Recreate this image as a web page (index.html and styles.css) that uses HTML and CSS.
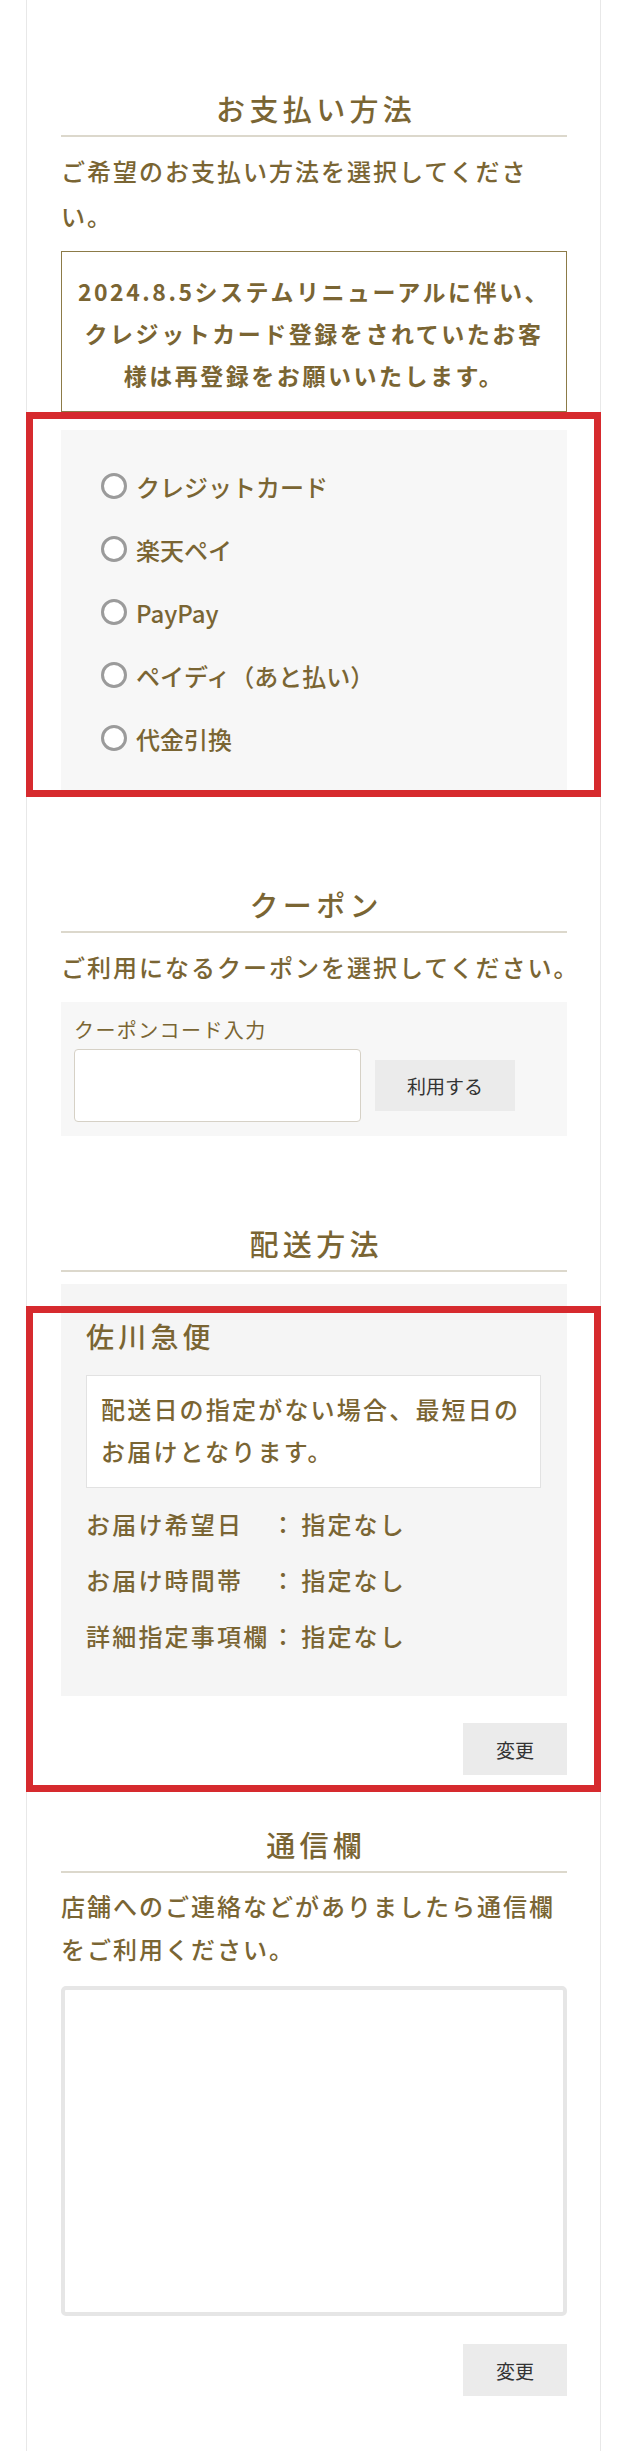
FILE: index.html
```html
<!DOCTYPE html>
<html lang="ja">
<head>
<meta charset="UTF-8">
<meta name="viewport" content="width=device-width, initial-scale=1">
<link rel="stylesheet" href="styles.css">
</head>
<body>

<div class="card">

  <section class="block">
    <h2 class="block-title">お支払い方法</h2>
    <p class="lead">ご希望のお支払い方法を選択してください。</p>
    <div class="notice">2024.8.5システムリニューアルに伴い、クレジットカード登録をされていたお客様は再登録をお願いいたします。</div>
    <div class="pay-box marked">
      <ul class="pay-list">
        <li><label><input type="radio" name="pay"><span>クレジットカード</span></label></li>
        <li><label><input type="radio" name="pay"><span>楽天ペイ</span></label></li>
        <li><label><input type="radio" name="pay"><span>PayPay</span></label></li>
        <li><label><input type="radio" name="pay"><span>ペイディ（あと払い）</span></label></li>
        <li><label><input type="radio" name="pay"><span>代金引換</span></label></li>
      </ul>
    </div>
  </section>

  <section class="block">
    <h2 class="block-title">クーポン</h2>
    <p class="lead lead-single">ご利用になるクーポンを選択してください。</p>
    <div class="coupon-box">
      <label class="coupon-label" for="couponCode">クーポンコード入力</label>
      <div class="coupon-row">
        <input type="text" id="couponCode" class="coupon-input">
        <button class="btn btn-use">利用する</button>
      </div>
    </div>
  </section>

  <section class="block">
    <h2 class="block-title">配送方法</h2>
    <div class="ship-wrap marked">
      <div class="ship-box">
        <div class="ship-name">佐川急便</div>
        <div class="ship-note">配送日の指定がない場合、最短日のお届けとなります。</div>
        <div class="ship-row"><span class="ship-key">お届け希望日</span><span class="ship-colon">：</span><span>指定なし</span></div>
        <div class="ship-row"><span class="ship-key">お届け時間帯</span><span class="ship-colon">：</span><span>指定なし</span></div>
        <div class="ship-row"><span class="ship-key">詳細指定事項欄</span><span class="ship-colon">：</span><span>指定なし</span></div>
      </div>
      <div class="btn-row"><button class="btn btn-change">変更</button></div>
    </div>
  </section>

  <section class="block memo">
    <h2 class="block-title">通信欄</h2>
    <p class="lead">店舗へのご連絡などがありましたら通信欄をご利用ください。</p>
    <textarea class="memo-text"></textarea>
    <div class="btn-row memo-btns"><button class="btn btn-change">変更</button></div>
  </section>

</div>

</body>
</html>
```

FILE: styles.css
```css
body {
  margin: 0;
  background: #fff;
  color: #7a6533;
  font-family: "Noto Sans CJK JP", "Noto Sans", sans-serif;
  font-weight: 500;
}

.card {
  box-sizing: border-box;
  width: 575px;
  min-height: 100vh;
  margin-left: 26px;
  padding: 88px 33px 40px 34px;
  border-left: 1px solid #e8e8e8;
  border-right: 1px solid #e8e8e8;
}

.block + .block {margin-top: 87px;}
.block.memo {margin-top: 49px;}

.block-title {
  margin: 0;
  padding: 0 0 7px 0.15em;
  font-size: 29px;
  font-weight: 500;
  line-height: 40px;
  letter-spacing: 0.15em;
  text-align: center;
  border-bottom: 2px solid #dcd8cc;
}

.lead {
  margin: 11px 0 13px;
  font-size: 24px;
  line-height: 45px;
  letter-spacing: 2px;
}

/* the closing 。 hangs at the line end */
.lead-single {white-space: nowrap;}

.memo .lead {
  line-height: 43px;
  margin-bottom: 16px;
}

.notice {
  border: 1px solid #8c7b48;
  padding: 18px 15px 15px;
  font-size: 23px;
  font-weight: bold;
  line-height: 42px;
  letter-spacing: 0.11em;
  text-align: center;
}

/* red marks drawn over the page */
.marked {position: relative;}
.marked::after {
  content: "";
  position: absolute;
  left: -35px;
  right: -34px;
  border: 7px solid #d62a2e;
  pointer-events: none;
}

.pay-box {
  margin-top: 18px;
  background: #f7f7f7;
  padding: 40px 0 43px 40px;
}
.pay-box::after {top: -18px; bottom: 0;}

.pay-list {
  list-style: none;
  margin: 0;
  padding: 0;
  display: flex;
  flex-direction: column;
  gap: 31px;
}

.pay-list label {
  display: flex;
  align-items: center;
  height: 32px;
  font-size: 24px;
}

.pay-list input {
  appearance: none;
  -webkit-appearance: none;
  box-sizing: border-box;
  width: 26px;
  height: 26px;
  margin: 0 9px 0 0;
  border: 3px solid #9b9b9b;
  border-radius: 50%;
  background: #fff;
}

.coupon-box {
  background: #f7f7f7;
  padding: 14px 13px;
}

.coupon-label {
  display: block;
  font-size: 20px;
  font-weight: 400;
  line-height: 28px;
  letter-spacing: 0.07em;
}

.coupon-row {
  display: flex;
  align-items: center;
  gap: 14px;
  margin-top: 5px;
}

.coupon-input {
  box-sizing: border-box;
  width: 287px;
  height: 73px;
  border: 1px solid #d6d1c6;
  border-radius: 4px;
  background: #fff;
}

.btn {
  border: none;
  border-radius: 0;
  background: #ebebeb;
  color: #333;
  font-family: "Noto Sans CJK JP", "Noto Sans", sans-serif;
  font-size: 19px;
  padding: 0;
}

.btn-use {width: 140px; height: 51px;}
.btn-change {width: 104px; height: 52px;}

.btn-row {
  display: flex;
  justify-content: flex-end;
  margin-top: 27px;
}
.memo-btns {margin-top: 28px;}

.ship-wrap {margin-top: 12px;}
.ship-wrap::after {top: 22px; bottom: -17px;}

.ship-box {
  background: #f5f5f5;
  padding: 32px 26px 32px 25px;
}

.ship-name {
  font-size: 28px;
  line-height: 40px;
  letter-spacing: 0.15em;
  margin-bottom: 19px;
}

.ship-note {
  background: #fff;
  border: 1px solid #e2e2e2;
  padding: 12px 14px 15px;
  font-size: 24px;
  line-height: 42px;
  letter-spacing: 2.2px;
}

.ship-note + .ship-row {margin-top: 8px;}

.ship-row {
  display: flex;
  font-size: 24px;
  line-height: 56px;
  letter-spacing: 2.2px;
}

.ship-key {width: 185px;}
.ship-colon {margin-right: 4px;}

.memo-text {
  display: block;
  box-sizing: border-box;
  width: 100%;
  height: 330px;
  border: 4px solid #e6e6e6;
  border-radius: 5px;
  background: #fff;
  resize: none;
}
```
